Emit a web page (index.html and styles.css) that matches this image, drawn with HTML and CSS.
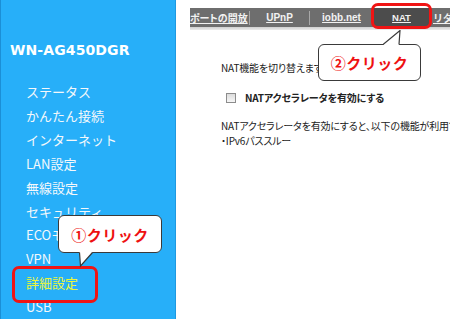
FILE: index.html
```html
<!DOCTYPE html>
<html lang="ja">
<head>
<meta charset="utf-8">
<link rel="stylesheet" href="styles.css">
</head>
<body>
<div class="page">
  <aside class="side">
    <div class="model">WN-AG450DGR</div>
    <ul class="menu">
      <li>ステータス</li>
      <li>かんたん接続</li>
      <li>インターネット</li>
      <li>LAN設定</li>
      <li>無線設定</li>
      <li>セキュリティ</li>
      <li>ECOモード</li>
      <li>VPN</li>
      <li class="active">詳細設定</li>
      <li>USB</li>
    </ul>
  </aside>
  <main class="main">
    <nav class="tabs">
      <span class="tab t1"><u>ポートの開放</u></span>
      <span class="sep"></span>
      <span class="tab t2"><u>UPnP</u></span>
      <span class="sep"></span>
      <span class="tab t3"><u>iobb.net</u></span>
      <span class="tab t4 cur"><u>NAT</u></span>
      <span class="tab t5"><u>リダイレクト</u></span>
    </nav>
    <div class="rule"></div>
    <div class="content">
      <p class="lead">NAT機能を切り替えます。</p>
      <label class="chk"><span class="box"></span><b>NATアクセラレータを有効にする</b></label>
      <p class="desc">NATアクセラレータを有効にすると、以下の機能が利用できなくなります。<br>・IPv6パススルー</p>
    </div>
  </main>
</div>

<div class="hl hl1"></div>
<div class="hl hl2"></div>

<div class="callout c1">
  <span class="ctext">①クリック</span>
  <svg class="tail tail1" width="16" height="16" viewBox="0 0 16 16">
    <polygon points="0.5,0 13.5,0 1.5,14" fill="#fff"/>
    <polyline points="0.5,0.5 1.5,14 13.5,0.5" fill="none" stroke="#3a3a3a" stroke-width="1.2"/>
  </svg>
</div>
<div class="callout c2">
  <span class="ctext">②クリック</span>
  <svg class="tail tail2" width="20" height="16" viewBox="0 0 20 16">
    <polygon points="0,15 17,0.5 16,15" fill="#fff"/>
    <polyline points="0,14.5 17,0.5 16,14.5" fill="none" stroke="#3a3a3a" stroke-width="1.2"/>
  </svg>
</div>
</body>
</html>
```

FILE: styles.css
```css
* { box-sizing: border-box; }
html, body { margin: 0; padding: 0; }
body {
  width: 450px;
  height: 319px;
  overflow: hidden;
  background: #fff;
  font-family: "Noto Sans CJK JP", "DejaVu Sans", sans-serif;
  position: relative;
}
.page {
  display: flex;
  height: 319px;
}
.side {
  width: 176px;
  flex: none;
  background: #27aff9;
  border-left: 1px solid #1b8fd6;
  border-right: 1px solid #1f99e0;
  padding: 42px 0 0 9px;
}
.model {
  font-family: "DejaVu Sans", sans-serif;
  font-weight: bold;
  font-size: 14px;
  line-height: 16px;
  color: #fff;
  letter-spacing: 0.1px;
}
.menu {
  list-style: none;
  margin: 22px 0 0;
  padding: 0 0 0 16px;
}
.menu li {
  font-size: 13px;
  line-height: 23.9px;
  color: #f4f8fb;
  white-space: nowrap;
}
.menu li.active { color: #ecf53a; }
.main {
  flex: 1;
  padding: 8px 0 0 14px;
  overflow: hidden;
}
.tabs {
  display: flex;
  align-items: center;
  height: 19px;
  background: #6e6e6e;
  white-space: nowrap;
}
.tab {
  height: 19px;
  display: flex;
  align-items: center;
  justify-content: center;
  color: #f2f2f2;
  font-weight: bold;
  font-size: 9.5px;
  flex: none;
}
.tab u { text-decoration: underline; text-underline-offset: 1px; }
.t1 { width: 59px; justify-content: flex-start; font-size: 10px; font-feature-settings: "palt"; }
.t2, .t3, .t4 { font-family: "Liberation Sans", sans-serif; }
.t2 { width: 59px; font-size: 10px; }
.t3 { width: 63px; font-size: 10px; }
.t4 { width: 57px; }
.t5 { justify-content: flex-start; padding-left: 3px; font-size: 10px; }
.cur { background: #4c4c4c; }
.sep {
  width: 1px;
  height: 14px;
  background: #a8a8a8;
  flex: none;
}
.rule {
  height: 3px;
  background: linear-gradient(#cfcfcf, #ececec);
}
.content {
  padding: 31px 0 0 31px;
  color: #222;
  font-size: 10px;
  font-feature-settings: "palt";
  white-space: nowrap;
  letter-spacing: -0.15px;
}
.lead { margin: 0; line-height: 14px; }
.chk {
  display: flex;
  align-items: center;
  margin: 16px 0 0 5px;
  line-height: 14px;
}
.chk b { font-weight: bold; margin-left: 9px; }
.box {
  width: 10px;
  height: 10px;
  border: 1px solid #8c8c8c;
  background: linear-gradient(#dcdcdc, #f6f6f6);
}
.desc { margin: 13px 0 0; line-height: 15px; }

.hl {
  position: absolute;
  border: 3px solid #f01414;
  border-radius: 7px;
}
.hl1 { left: 12px; top: 266px; width: 86px; height: 37px; }
.hl2 { left: 371px; top: 3px; width: 61px; height: 26px; }

.callout {
  position: absolute;
  background: #fff;
  border: 1px solid #3a3a3a;
  border-radius: 6px;
  display: flex;
  align-items: center;
  justify-content: center;
}
.ctext {
  color: #ee1111;
  font-weight: bold;
  font-size: 15px;
  letter-spacing: 0.5px;
}
.c1 { left: 58px; top: 215px; width: 104px; height: 38px; }
.c2 { left: 318px; top: 44px; width: 103px; height: 37px; }
.tail { position: absolute; }
.tail1 { left: 20px; top: 36px; }
.tail2 { left: 64px; top: -15px; }
```
